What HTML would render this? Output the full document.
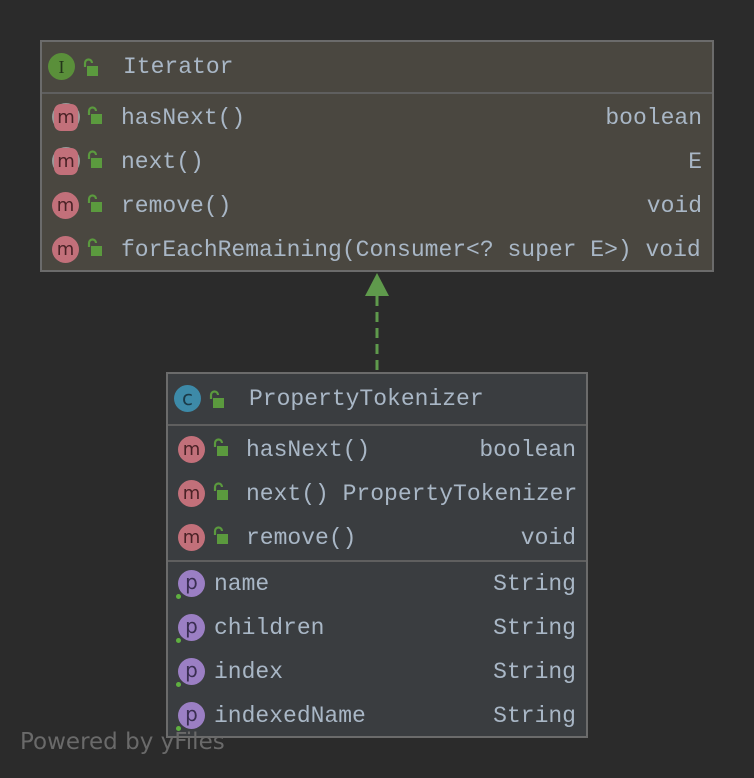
<!DOCTYPE html>
<html><head><meta charset="utf-8"><style>
body{margin:0;width:754px;height:778px;background:#2b2b2b;position:relative;overflow:hidden;font-family:"Liberation Mono","DejaVu Sans Mono",monospace;}
.box{position:absolute;border:2px solid #6b6b6b;box-sizing:border-box;}
.t{position:absolute;font-size:23px;color:#a9b7c6;line-height:26px;white-space:pre;}
.r{position:absolute;font-size:23px;color:#a9b7c6;line-height:26px;white-space:pre;text-align:right;}
.c{position:absolute;width:27px;height:27px;border-radius:50%;font-family:"DejaVu Sans",sans-serif;font-size:18px;line-height:28px;text-align:center;color:#2b2b2b;}
.m{background:#c2707a;color:#4a2226;}
.p{background:#9b7fc4;color:#3a2e52;line-height:25px;font-size:20px;}
.sep{position:absolute;height:2px;background:#5f5f5f;}
.dot{position:absolute;width:5px;height:5px;border-radius:50%;background:#5fb040;}
</style></head><body>
<div class="box" style="left:40px;top:40px;width:674px;height:232px;background:#4a4740;"></div>
<div class="sep" style="left:42px;top:92px;width:670px;"></div>
<div class="c" style="left:48px;top:53px;background:#5a8f3a;color:#23351a;font-family:'Liberation Serif',serif;">I</div>
<div class="t" style="left:123px;top:54px;">Iterator</div>

<div class="box" style="left:166px;top:372px;width:422px;height:366px;background:#3a3d40;"></div>
<div class="sep" style="left:168px;top:424px;width:418px;"></div>
<div class="sep" style="left:168px;top:560px;width:418px;"></div>
<div class="c" style="left:174px;top:385px;background:#3d8aa8;color:#1b3a48;font-size:20px;line-height:26px;">c</div>
<div class="t" style="left:249px;top:386px;">PropertyTokenizer</div>

<svg width="754" height="778" style="position:absolute;left:0;top:0">
<defs><g id="lk"><path d="M1 0 v-4 a3.5 3.5 0 0 1 7 0" fill="none" stroke="#5b9a3e" stroke-width="2.2"/><rect x="3" y="-1" width="11" height="10" fill="#5b9a3e"/></g></defs>
<use href="#lk" x="84" y="67"/>
<use href="#lk" x="88" y="115"/><use href="#lk" x="88" y="159"/><use href="#lk" x="88" y="203"/><use href="#lk" x="88" y="247"/>
<use href="#lk" x="210" y="399"/>
<use href="#lk" x="214" y="447"/><use href="#lk" x="214" y="491"/><use href="#lk" x="214" y="535"/>
<line x1="377" y1="296" x2="377" y2="372" stroke="#5f9a4c" stroke-width="3" stroke-dasharray="10,6"/>
<polygon points="377,273 365,296 389,296" fill="#5f9a4c"/>
<circle cx="66" cy="117" r="14" fill="#9a9a9a"/><circle cx="66" cy="161" r="14" fill="#9a9a9a"/>
</svg>

<div class="c m" style="left:54px;top:104px;width:24px;border-radius:7px;">m</div>
<div class="c m" style="left:54px;top:148px;width:24px;border-radius:7px;">m</div>
<div class="c m" style="left:52px;top:192px;">m</div>
<div class="c m" style="left:52px;top:236px;">m</div>
<div class="t" style="left:121px;top:105px;">hasNext()</div><div class="r" style="right:52px;top:105px;">boolean</div>
<div class="t" style="left:121px;top:149px;">next()</div><div class="r" style="right:52px;top:149px;">E</div>
<div class="t" style="left:121px;top:193px;">remove()</div><div class="r" style="right:52px;top:193px;">void</div>
<div class="t" style="left:121px;top:237px;">forEachRemaining(Consumer&lt;? super E&gt;) void</div>

<div class="c m" style="left:178px;top:436px;">m</div>
<div class="c m" style="left:178px;top:480px;">m</div>
<div class="c m" style="left:178px;top:524px;">m</div>
<div class="t" style="left:246px;top:437px;">hasNext()</div><div class="r" style="right:178px;top:437px;">boolean</div>
<div class="t" style="left:246px;top:481px;">next() PropertyTokenizer</div>
<div class="t" style="left:246px;top:525px;">remove()</div><div class="r" style="right:178px;top:525px;">void</div>

<div class="c p" style="left:178px;top:570px;">p</div><div class="dot" style="left:176px;top:594px;"></div>
<div class="c p" style="left:178px;top:614px;">p</div><div class="dot" style="left:176px;top:638px;"></div>
<div class="c p" style="left:178px;top:658px;">p</div><div class="dot" style="left:176px;top:682px;"></div>
<div class="c p" style="left:178px;top:702px;">p</div><div class="dot" style="left:176px;top:726px;"></div>
<div class="t" style="left:214px;top:571px;">name</div><div class="r" style="right:178px;top:571px;">String</div>
<div class="t" style="left:214px;top:615px;">children</div><div class="r" style="right:178px;top:615px;">String</div>
<div class="t" style="left:214px;top:659px;">index</div><div class="r" style="right:178px;top:659px;">String</div>
<div class="t" style="left:214px;top:703px;">indexedName</div><div class="r" style="right:178px;top:703px;">String</div>

<div style="position:absolute;left:20px;top:729px;font-family:'DejaVu Sans',sans-serif;font-size:23px;color:#6a6a6a;">Powered by yFiles</div>
</body></html>
